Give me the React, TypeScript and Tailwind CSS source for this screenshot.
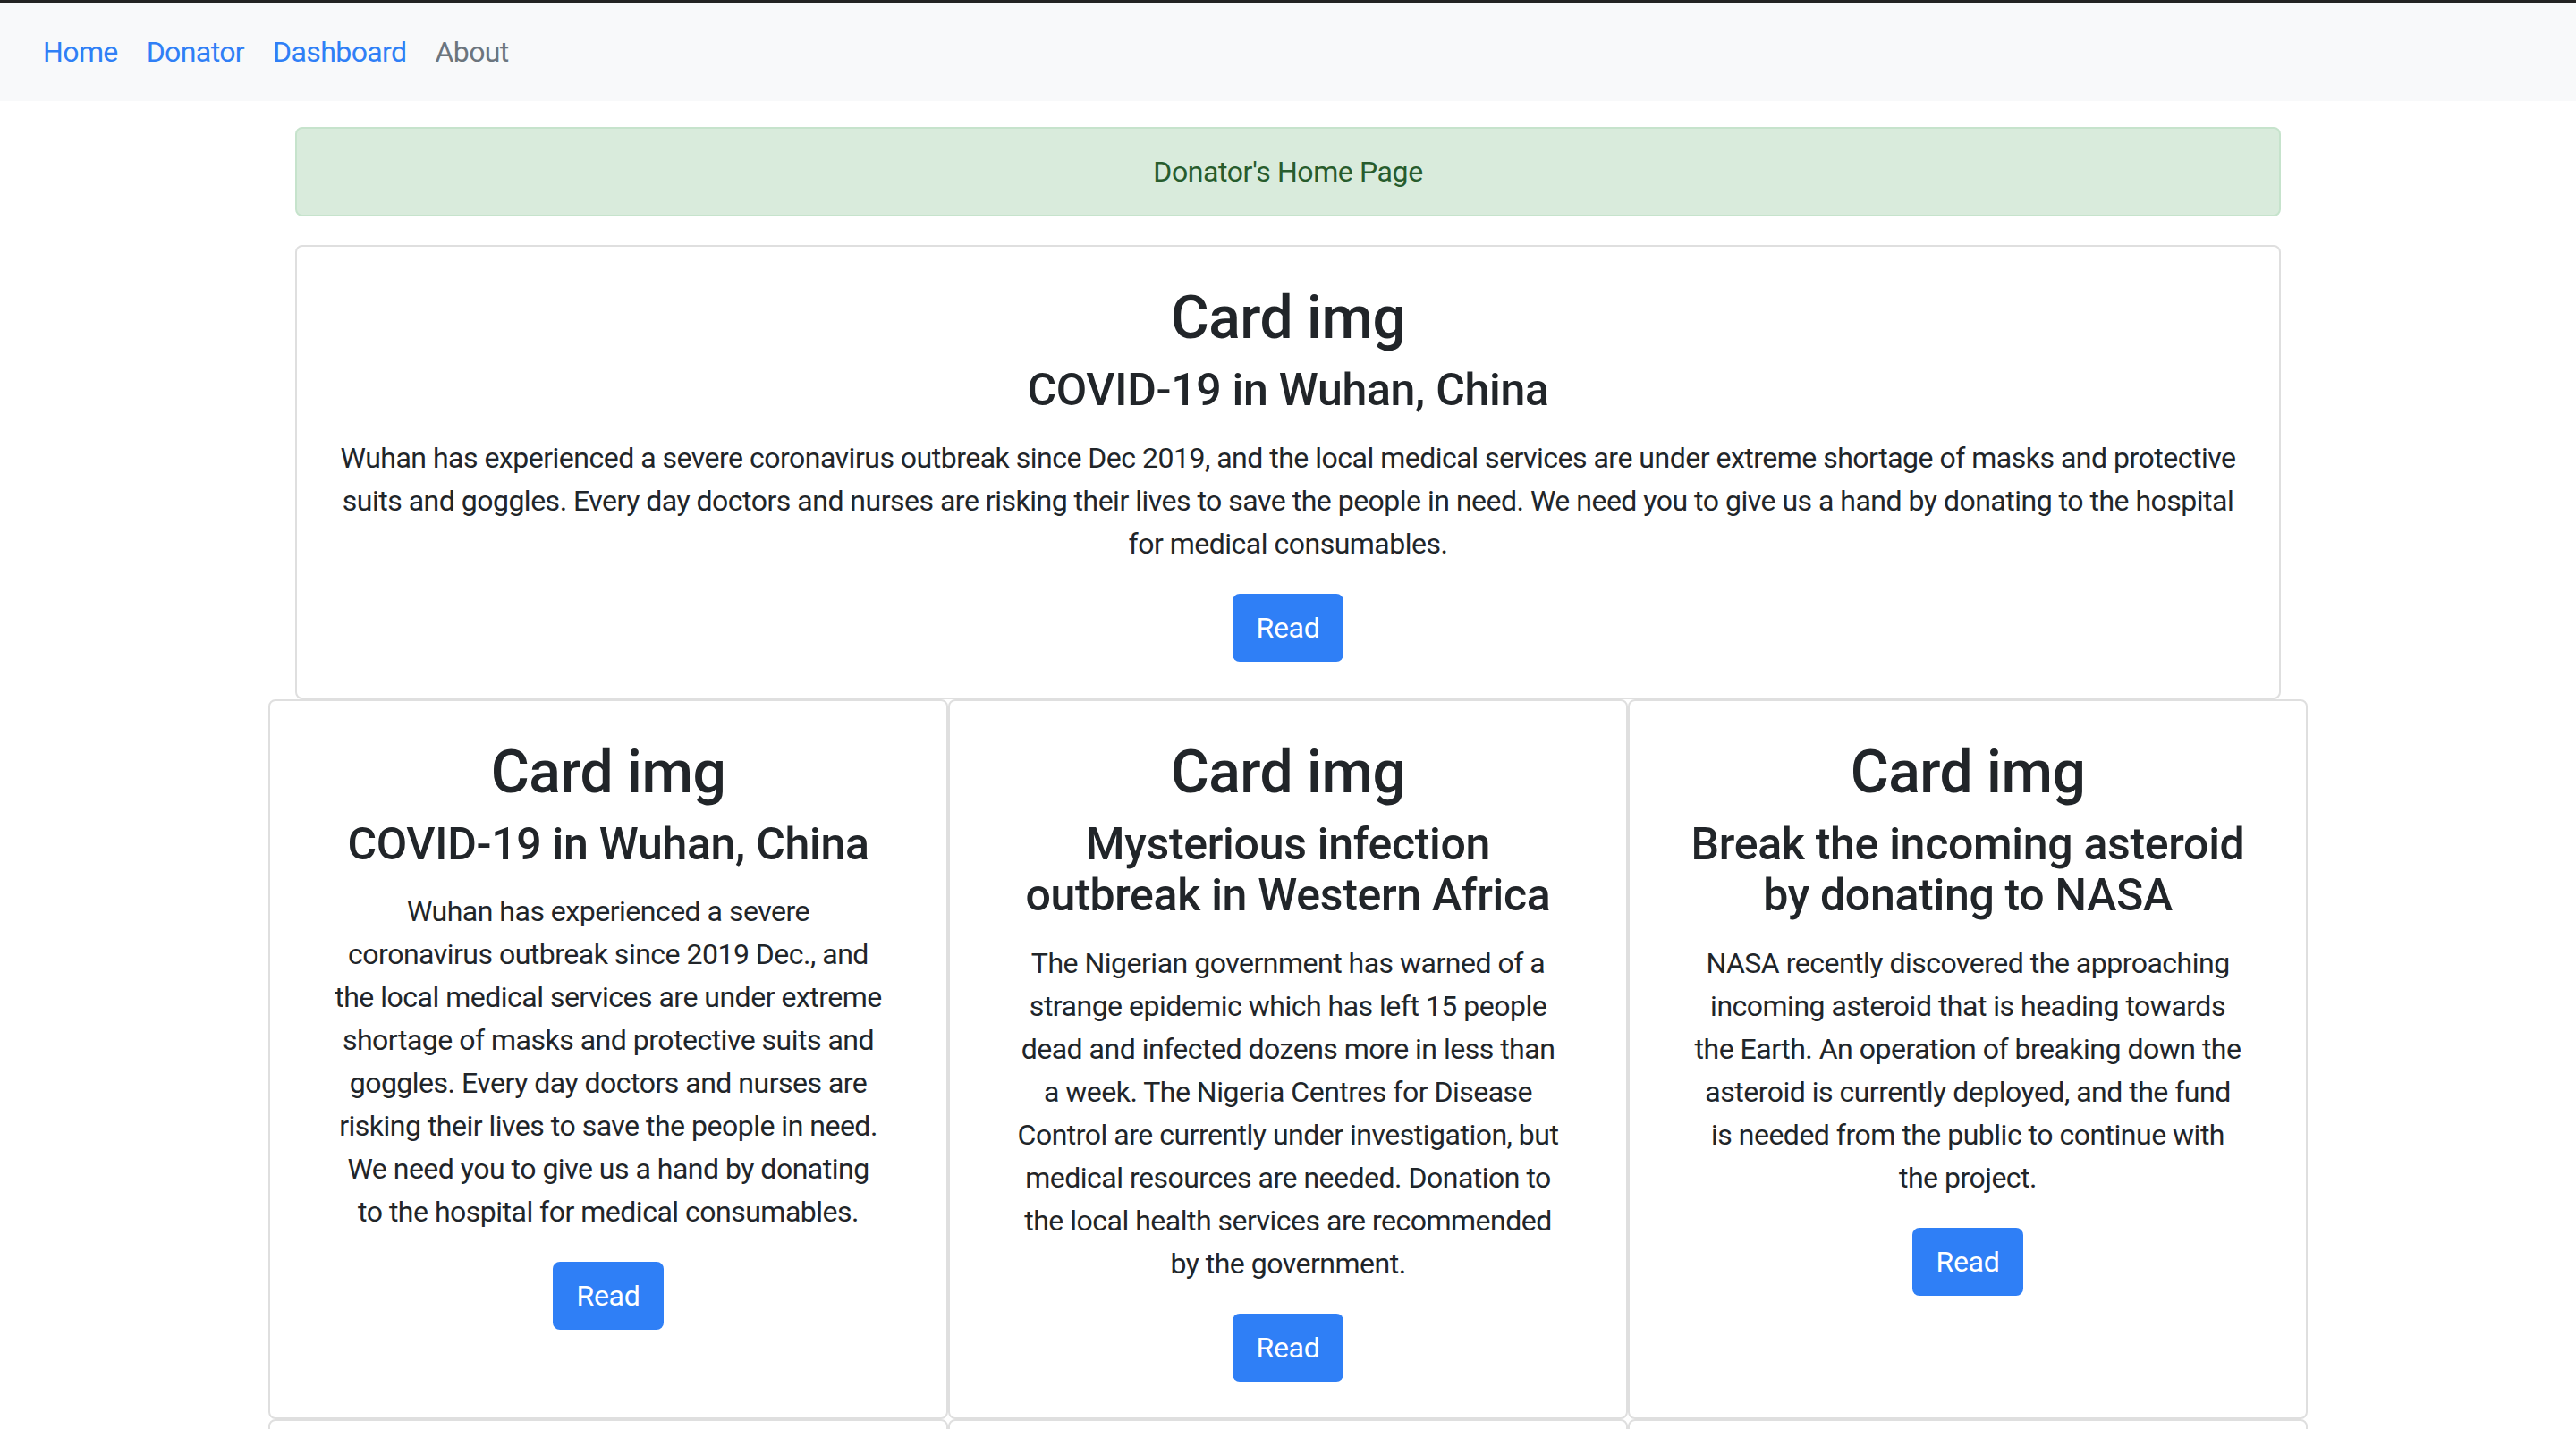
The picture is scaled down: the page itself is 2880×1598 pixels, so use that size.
import React from "react";

type Card = {
  subtitle: string[];
  body: string[];
};

const cards: Card[] = [
  {
    subtitle: ["COVID-19 in Wuhan, China"],
    body: [
      "Wuhan has experienced a severe",
      "coronavirus outbreak since 2019 Dec., and",
      "the local medical services are under extreme",
      "shortage of masks and protective suits and",
      "goggles. Every day doctors and nurses are",
      "risking their lives to save the people in need.",
      "We need you to give us a hand by donating",
      "to the hospital for medical consumables.",
    ],
  },
  {
    subtitle: ["Mysterious infection", "outbreak in Western Africa"],
    body: [
      "The Nigerian government has warned of a",
      "strange epidemic which has left 15 people",
      "dead and infected dozens more in less than",
      "a week. The Nigeria Centres for Disease",
      "Control are currently under investigation, but",
      "medical resources are needed. Donation to",
      "the local health services are recommended",
      "by the government.",
    ],
  },
  {
    subtitle: ["Break the incoming asteroid", "by donating to NASA"],
    body: [
      "NASA recently discovered the approaching",
      "incoming asteroid that is heading towards",
      "the Earth. An operation of breaking down the",
      "asteroid is currently deployed, and the fund",
      "is needed from the public to continue with",
      "the project.",
    ],
  },
];

const featured: Card = {
  subtitle: ["COVID-19 in Wuhan, China"],
  body: [
    "Wuhan has experienced a severe coronavirus outbreak since Dec 2019, and the local medical services are under extreme shortage of masks and protective",
    "suits and goggles. Every day doctors and nurses are risking their lives to save the people in need. We need you to give us a hand by donating to the hospital",
    "for medical consumables.",
  ],
};

function Lines({ lines }: { lines: string[] }) {
  return (
    <>
      {lines.map((l, i) => (
        <React.Fragment key={i}>
          {i > 0 && <br />}
          {l}
        </React.Fragment>
      ))}
    </>
  );
}

function CardBody({ card }: { card: Card }) {
  return (
    <div className="px-[40px] pt-[41px] pb-[40px] flex flex-col items-center text-center">
      <h2 className="text-[66px] leading-[77px] font-medium mb-[14px] tracking-[-0.5px]">
        Card img
      </h2>
      <h4 className="text-[50px] leading-[57.6px] font-medium mb-[22px] tracking-[-0.3px] whitespace-nowrap">
        <Lines lines={card.subtitle} />
      </h4>
      <p className="leading-[48px] mb-[32px] whitespace-nowrap tracking-[-0.5px]">
        <Lines lines={card.body} />
      </p>
      <button className="h-[76px] px-[27px] rounded-[8px] bg-[#2f7ff6] text-white leading-[48px] tracking-[-0.3px]">
        Read
      </button>
    </div>
  );
}

export default function App() {
  return (
    <div className="h-screen overflow-hidden bg-white font-['Roboto',sans-serif] text-[32px] text-[#212529]">
      <div className="h-[3px] bg-[#232323]" />
      <nav className="h-[110px] bg-[#f8f9fa] flex items-center px-[32px] tracking-[-0.6px]">
        <a className="px-[16px] text-[#2f7ff6]">Home</a>
        <a className="px-[16px] text-[#2f7ff6]">Donator</a>
        <a className="px-[16px] text-[#2f7ff6]">Dashboard</a>
        <a className="px-[16px] text-[#6c757d]">About</a>
      </nav>

      <div className="w-[2220px] mx-auto mt-[29px]">
        <div className="h-[100px] flex items-center justify-center rounded-[8px] border-2 border-[#c6e3cc] bg-[#d9ebdc] text-[#275c2d] mb-[32px] tracking-[-0.4px]">
          Donator's Home Page
        </div>

        <div className="border-2 border-[#dfdfdf] rounded-[8px]">
          <CardBody card={featured} />
        </div>

        <div className="-mx-[30px] grid grid-cols-3">
          {cards.map((c, i) => (
            <div key={i} className="border-2 border-[#dfdfdf] rounded-[8px]">
              <CardBody card={c} />
            </div>
          ))}
        </div>

        <div className="-mx-[30px] grid grid-cols-3">
          {cards.map((c, i) => (
            <div key={i} className="border-2 border-[#dfdfdf] rounded-[8px]">
              <CardBody card={c} />
            </div>
          ))}
        </div>
      </div>
    </div>
  );
}
